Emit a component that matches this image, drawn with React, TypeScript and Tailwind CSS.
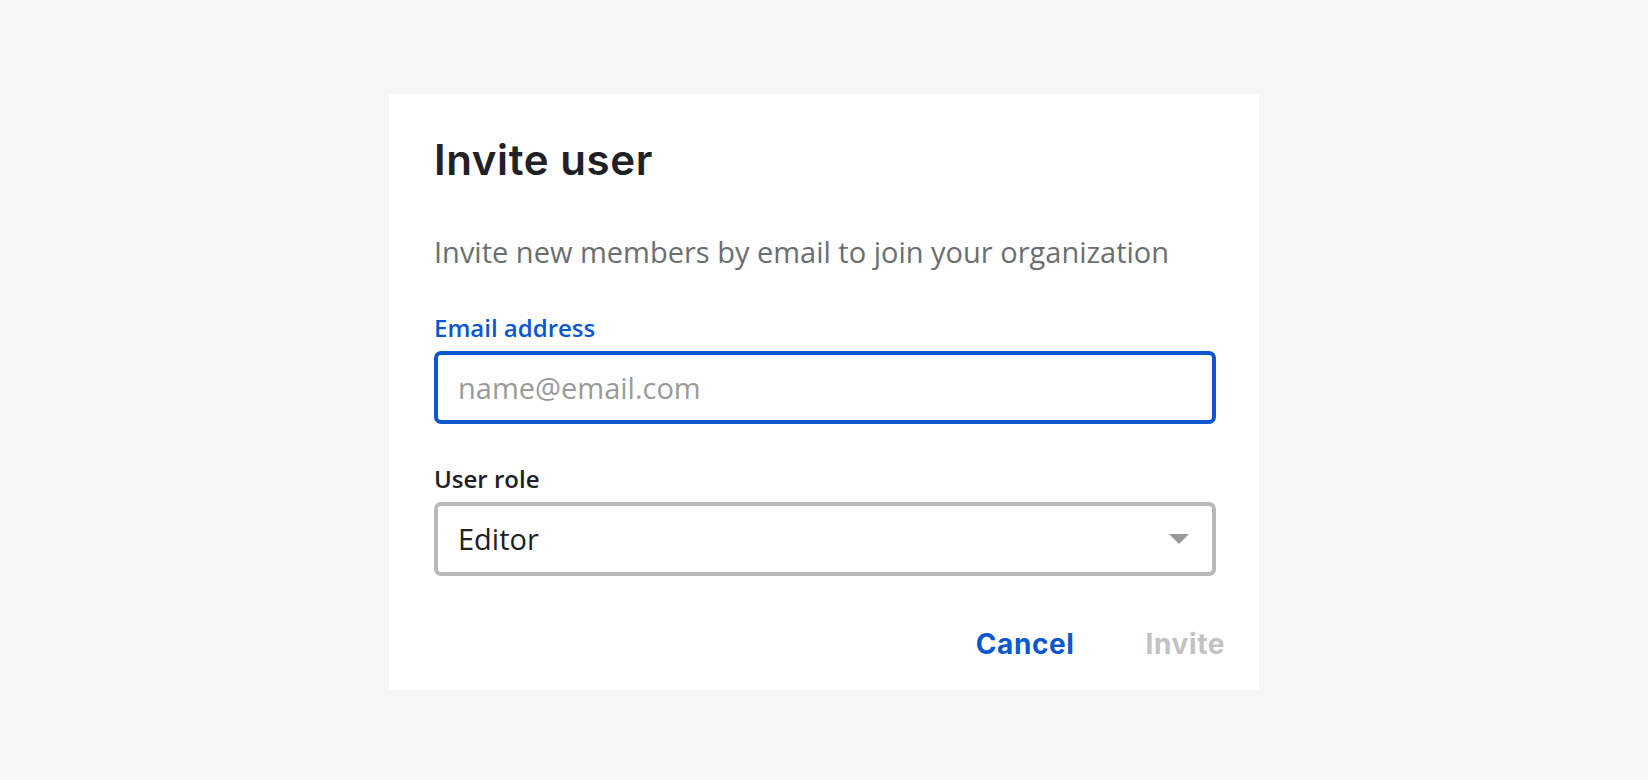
import { useState } from 'react'

export default function App() {
  const [email, setEmail] = useState('')

  return (
    <div className="min-h-screen w-full bg-[#f5f6f6] flex justify-center pt-[94px] font-['Open_Sans',sans-serif]">
      <div className="w-[870px] h-[596px] bg-white pl-[45px] pr-[43px] pt-[38px] flex flex-col">
        <h2 className="font-['Inter',sans-serif] text-[42px] font-semibold text-[#202124] tracking-[0.6px] leading-[56px]">Invite user</h2>

        <p className="mt-[44px] text-[29px] leading-[40px] text-[#6b6e70]">Invite new members by email to join your organization</p>

        <label className="mt-[40px] block text-[24px] leading-[32px] font-semibold text-[#0b57d0]">Email address</label>
        <input
          value={email}
          onChange={e => setEmail(e.target.value)}
          placeholder="name@email.com"
          className="mt-[7px] h-[73px] w-full rounded-[7px] border-4 border-[#0b57d0] px-[20px] text-[29px] text-[#202124] placeholder:text-[#9a9a9a] outline-none"
        />

        <label className="mt-[39px] block text-[24px] leading-[32px] font-semibold text-[#202124]">User role</label>
        <div className="mt-[7px] h-[74px] w-full rounded-[7px] border-4 border-[#b8b8b8] px-[20px] flex items-center justify-between">
          <span className="text-[29px] text-[#202124]">Editor</span>
          <svg width="20" height="10" viewBox="0 0 20 10" className="mr-[3px]">
            <path d="M0 0 L20 0 L10 10 Z" fill="#999999" />
          </svg>
        </div>

        <div className="mt-[50px] flex justify-end items-center gap-[71px] -mr-[9px] leading-[36px]">
          <button className="font-['Inter',sans-serif] text-[28px] font-bold tracking-[0.6px] text-[#0b57d0]">Cancel</button>
          <button className="font-['Inter',sans-serif] text-[28px] font-bold tracking-[0.6px] text-[#c2c2c2]">Invite</button>
        </div>
      </div>
    </div>
  )
}
